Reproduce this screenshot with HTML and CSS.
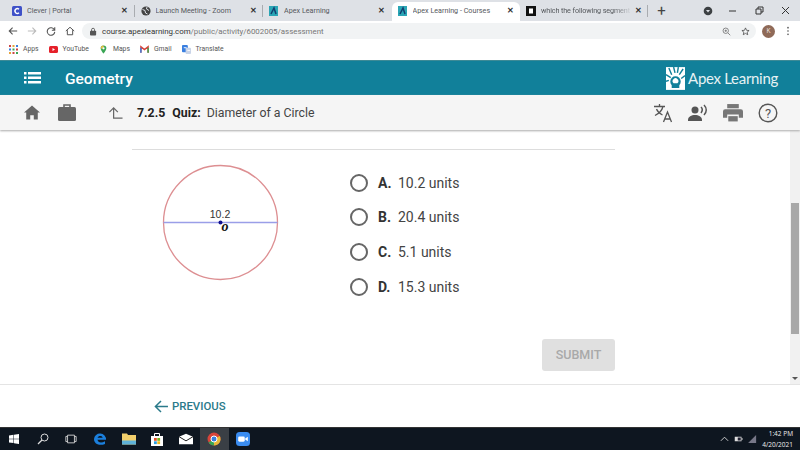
FILE: index.html
```html
<!DOCTYPE html>
<html lang="en">
<head>
<meta charset="UTF-8">
<meta name="viewport" content="width=device-width, initial-scale=1.0">
<title>Apex Learning - Courses</title>
<link rel="stylesheet" href="styles.css">
</head>
<body>

<!-- Browser tabs -->
<div class="tabstrip">
    <div class="tab">
        <svg class="favicon" viewBox="0 0 10 10"><rect width="10" height="10" rx="1.5" fill="#3f51c8"/><path d="M7 3.2A2.4 2.4 0 1 0 7 6.8" fill="none" stroke="#fff" stroke-width="1.4"/></svg>
        <span class="tab-title">Clever | Portal</span>
        <span class="tab-close">&#10005;</span>
    </div>
    <div class="tab">
        <svg class="favicon" viewBox="0 0 10 10"><circle cx="5" cy="5" r="4.6" fill="#444"/><path d="M1.5 3.5L4 4.5 4.5 7 6.5 8M6 1L5.500 3 8 4.500" fill="none" stroke="#dee1e6" stroke-width="1"/></svg>
        <span class="tab-title">Launch Meeting - Zoom</span>
        <span class="tab-close">&#10005;</span>
    </div>
    <div class="tab no-sep">
        <svg class="favicon" viewBox="0 0 10 10"><rect width="9" height="10" fill="#2aa5b5"/><path d="M2 8L5 2 7 8" fill="none" stroke="#123f70" stroke-width="1.5"/></svg>
        <span class="tab-title">Apex Learning</span>
        <span class="tab-close">&#10005;</span>
    </div>
    <div class="tab active">
        <svg class="favicon" viewBox="0 0 10 10"><rect width="9" height="10" fill="#2aa5b5"/><path d="M2 8L5 2 7 8" fill="none" stroke="#123f70" stroke-width="1.5"/></svg>
        <span class="tab-title">Apex Learning - Courses</span>
        <span class="tab-close">&#10005;</span>
    </div>
    <div class="tab last">
        <svg class="favicon" viewBox="0 0 10 10"><rect width="10" height="10" fill="#111"/><rect x="3" y="2.500" width="4" height="5" fill="#fff"/></svg>
        <span class="tab-title fade">which the following segment</span>
        <span class="tab-close">&#10005;</span>
    </div>
    <span class="new-tab">+</span>
    <div class="window-controls">
        <svg class="ctl" viewBox="0 0 10 10"><circle cx="5" cy="5" r="4.300" fill="#3c4043"/><path d="M3 4h4L5 6.500z" fill="#dee1e6"/></svg>
        <svg class="ctl" viewBox="0 0 10 10"><path d="M0 5h7" stroke="#333" fill="none"/></svg>
        <svg class="ctl" viewBox="0 0 10 10"><path d="M1 3h5v5H1zM3 3V1h5v5H6" stroke="#333" fill="none"/></svg>
        <svg class="ctl" viewBox="0 0 10 10"><path d="M1 1l7 7M8 1L1 8" stroke="#333" fill="none"/></svg>
    </div>
</div>

<!-- Address bar -->
<div class="toolbar">
    <svg class="nav-icon" viewBox="0 0 12 12"><path d="M11 6H1.500M5.500 2L1.500 6l4 4" fill="none" stroke="#555" stroke-width="1.300"/></svg>
    <svg class="nav-icon" viewBox="0 0 12 12"><path d="M1 6h9.500M6.500 2l4 4-4 4" fill="none" stroke="#bbb" stroke-width="1.300"/></svg>
    <svg class="nav-icon" viewBox="0 0 12 12"><path d="M10 4.500A4.500 4.500 0 1 0 10.500 7M10.500 1.500v3.500H7" fill="none" stroke="#555" stroke-width="1.300"/></svg>
    <svg class="nav-icon" viewBox="0 0 12 12"><path d="M1 6l5-4.500L11 6M2.800 5v5.500h6.400V5" fill="none" stroke="#555" stroke-width="1.200"/></svg>
    <div class="omnibox">
        <svg class="lock" viewBox="0 0 8 10"><rect y="4" width="7" height="5.500" rx="1" fill="#555"/><path d="M1.800 4.500V3a1.700 1.700 0 0 1 3.400 0v1.500" fill="none" stroke="#555"/></svg>
        <span class="url"><b>course.apexlearning.com</b>/public/activity/6002005/assessment</span>
        <svg class="omni-icon" viewBox="0 0 12 12"><circle cx="5" cy="5" r="3.600" fill="none" stroke="#666"/><path d="M8 8l3 3M3.500 5h3M5 3.500v3" stroke="#666" fill="none"/></svg>
        <svg class="omni-icon" viewBox="0 0 12 12"><path d="M6 1.200l1.400 3.200 3.400.3-2.600 2.200.8 3.400L6 8.500l-3 1.800.8-3.400L1.200 4.700l3.400-.3z" fill="none" stroke="#444"/></svg>
    </div>
    <span class="avatar">K</span>
    <svg class="menu-dots" viewBox="0 0 4 12"><circle cx="2" cy="2" r="1" fill="#555"/><circle cx="2" cy="6" r="1" fill="#555"/><circle cx="2" cy="10" r="1" fill="#555"/></svg>
</div>

<!-- Bookmarks -->
<div class="bookmarks">
    <span class="bookmark">
        <svg class="mark-icon" viewBox="0 0 9 9"><g fill="#c44"><rect width="2" height="2"/></g><rect x="3.500" width="2" height="2" fill="#e8a33a"/><rect x="7" width="2" height="2" fill="#3a7fe0"/><rect y="3.500" width="2" height="2" fill="#3a7fe0"/><rect x="3.500" y="3.500" width="2" height="2" fill="#3aa655"/><rect x="7" y="3.500" width="2" height="2" fill="#c44"/><rect y="7" width="2" height="2" fill="#e8a33a"/><rect x="3.500" y="7" width="2" height="2" fill="#c44"/><rect x="7" y="7" width="2" height="2" fill="#3aa655"/></svg>
        Apps
    </span>
    <span class="bookmark">
        <svg class="mark-icon wide" viewBox="0 0 9 7"><rect width="9" height="7" rx="1.500" fill="#e5202a"/><path d="M3.500 2l2.500 1.500L3.500 5z" fill="#fff"/></svg>
        YouTube
    </span>
    <span class="bookmark">
        <svg class="mark-icon" viewBox="0 0 9 11"><path d="M4.500 0.500a3.500 3.500 0 0 1 3.500 3.500c0 2.500-3.500 6.500-3.500 6.500S1 6.500 1 4A3.500 3.500 0 0 1 4.500 .5z" fill="#3aa655"/><path d="M1.200 3a3.500 3.500 0 0 1 3-2.500L5 2.500 2 5z" fill="#e8b93a"/><circle cx="4.500" cy="4" r="1.400" fill="#fff"/></svg>
        Maps
    </span>
    <span class="bookmark">
        <svg class="mark-icon" viewBox="0 0 10 8"><path d="M1 7.500V1l4 3.200L9 1v6.500" fill="none" stroke="#d8443a" stroke-width="1.600"/><path d="M1 7.500V2" stroke="#3a7fe0" stroke-width="1.600"/><path d="M9 7.500V2" stroke="#3aa655" stroke-width="1.600"/></svg>
        Gmail
    </span>
    <span class="bookmark">
        <svg class="mark-icon" viewBox="0 0 10 10"><rect width="6.500" height="8" rx="1" fill="#3a7fe0"/><rect x="4" y="3" width="6" height="7" rx="1" fill="#c9d4e8"/><path d="M2 3h3M6 6h3" stroke="#fff" fill="none"/></svg>
        Translate
    </span>
</div>

<!-- Course header -->
<header class="course-bar">
    <svg class="list-icon" viewBox="0 0 17 12"><g fill="#fff"><rect width="2.500" height="2.500"/><rect y="4.500" width="2.500" height="2.500"/><rect y="9" width="2.500" height="2.500"/><rect x="4" width="13" height="2.500"/><rect x="4" y="4.500" width="13" height="2.500"/><rect x="4" y="9" width="13" height="2.500"/></g></svg>
    <span class="course-title">Geometry</span>
    <div class="logo">
        <svg class="logo-mark" viewBox="0 0 20 24"><rect width="20" height="24" fill="#fff"/><g fill="none" stroke="#11809a" stroke-width="1.500"><path d="M3 1l3 7M8 0l1.500 6M13 0l-1 6M18 2l-4 6M0 8l5 3M20 9l-4 3M0 15l3-1"/><path d="M6 19a5.500 5.500 0 1 1 8 0v3H6z" fill="#11809a" stroke="none"/></g><path d="M8 17a3 3 0 1 1 4 0z" fill="#fff"/></svg>
        <span class="logo-text">Apex Learning</span>
    </div>
</header>

<!-- Activity bar -->
<div class="activity-bar">
    <svg class="tool home" viewBox="0 0 18 16"><path d="M9 0L0 8h2.500v8H7v-5h4v5h4.500V8H18z" fill="#666"/></svg>
    <svg class="tool case" viewBox="0 0 18 17"><path d="M6 3V1h6v2" fill="none" stroke="#666" stroke-width="1.600"/><rect y="3" width="18" height="14" rx="1.500" fill="#666"/></svg>
    <svg class="tool up" viewBox="0 0 16 14"><path d="M15.500 12.500H6V1.500M1.500 6L6 1.500 10.500 6" fill="none" stroke="#666" stroke-width="1.300"/></svg>
    <span class="crumb-num">7.2.5</span>
    <span class="crumb-kind">Quiz:</span>
    <span class="crumb-name">Diameter of a Circle</span>
    <div class="tools-right">
        <svg class="tool" viewBox="0 0 20 20"><g fill="none" stroke="#555" stroke-width="1.300"><path d="M1 3.500h11M6.500 1v2.500M10 3.500C9 7.500 6 10.500 2 12.500M3.500 6c1 2.500 3 4.500 6 6"/><path d="M10.500 19l4-10 4 10M12 16h5"/></g></svg>
        <svg class="tool" viewBox="0 0 20 18"><circle cx="7" cy="6" r="3.500" fill="#555"/><path d="M0 16c0-3.500 3.500-5 7-5s7 1.500 7 5v1H0z" fill="#555"/><path d="M13 3c1.500 1.500 1.500 4 0 6M16 1c3 3 3 7 0 10" fill="none" stroke="#555" stroke-width="1.500"/></svg>
        <svg class="tool" viewBox="0 0 19 17"><rect x="4" width="11" height="4" fill="#777"/><path d="M2 5h15a2 2 0 0 1 2 2v6h-4v-3H4v3H0V7a2 2 0 0 1 2-2z" fill="#777"/><rect x="5" y="11.500" width="9" height="5" fill="#777"/></svg>
        <svg class="tool" viewBox="0 0 20 20"><circle cx="10" cy="10" r="8.800" fill="none" stroke="#555" stroke-width="1.400"/><text x="10" y="14.500" class="help-mark">?</text></svg>
    </div>
</div>

<!-- Question area -->
<div class="page">
    <main class="content">
        <div class="question">
            <div class="rule"></div>
            <div class="question-row">
                <svg class="figure" viewBox="0 0 180 150">
                    <circle cx="88.500" cy="72.500" r="57" fill="#fff" stroke="#dd8f92" stroke-width="1.300"/>
                    <line x1="31.500" y1="72.500" x2="145.500" y2="72.500" stroke="#9a9ee8" stroke-width="1.400"/>
                    <circle cx="88.500" cy="72.500" r="2" fill="#10108f"/>
                    <text x="88" y="67.500" class="fig-label">10.2</text>
                    <text x="93" y="81" class="fig-point">o</text>
                </svg>
                <div class="options">
                    <div class="option"><span class="radio"></span><b>A.</b><span>10.2 units</span></div>
                    <div class="option"><span class="radio"></span><b>B.</b><span>20.4 units</span></div>
                    <div class="option"><span class="radio"></span><b>C.</b><span>5.1 units</span></div>
                    <div class="option"><span class="radio"></span><b>D.</b><span>15.3 units</span></div>
                </div>
            </div>
            <div class="actions"><button class="submit">SUBMIT</button></div>
        </div>
    </main>
    <div class="scrollbar">
        <div class="thumb"></div>
        <span class="scroll-arrow"></span>
    </div>
</div>

<!-- Quiz footer -->
<footer class="quiz-footer">
    <svg class="prev-arrow" viewBox="0 0 15 14"><path d="M15 7H1.500M7.500 1L1.500 7l6 6" fill="none" stroke="#2a7a8a" stroke-width="1.600"/></svg>
    <span class="prev-label">PREVIOUS</span>
</footer>

<!-- Windows taskbar -->
<div class="taskbar">
    <span class="task-slot"><svg class="task-icon small" viewBox="0 0 10 10"><path d="M0 1.500L4.500.8v3.900H0zM5 .7L10 0v4.700H5zM0 5.200h4.500v3.900L0 8.500zM5 5.200h5V10l-5-.7z" fill="#fff"/></svg></span>
    <span class="task-slot"><svg class="task-icon" viewBox="0 0 12 12"><circle cx="7.500" cy="4.500" r="3.500" fill="none" stroke="#ddd"/><path d="M5 7l-4 4" stroke="#ddd" stroke-width="1.200" fill="none"/></svg></span>
    <span class="task-slot"><svg class="task-icon" viewBox="0 0 14 12"><path d="M3 1.500h8v9H3zM3 3H1v6h2M11 3h2v6h-2" fill="none" stroke="#ddd"/></svg></span>
    <span class="task-slot"><svg class="task-icon big" viewBox="0 0 14 14"><path d="M1 7a6 6 0 0 1 12 .8H4.500c.3 2.800 4 3.400 7.500 1.400v2.800C7 14 1 12.500 1 7zM4.600 5.800h5C9.400 3.400 5.200 3.400 4.600 5.800z" fill="#1b7fdc"/></svg></span>
    <span class="task-slot"><svg class="task-icon big" viewBox="0 0 14 13"><path d="M0 1h5l1 1.500h8V12H0z" fill="#f2cf6c"/><rect y="8" width="14" height="4" fill="#5fb2d8"/></svg></span>
    <span class="task-slot"><svg class="task-icon big" viewBox="0 0 14 14"><path d="M1 4h12v10H1z" fill="#fff"/><path d="M4.500 4V1.500h5V4" fill="none" stroke="#fff"/><rect x="4" y="6" width="2.800" height="2.800" fill="#e5502a"/><rect x="7.300" y="6" width="2.800" height="2.800" fill="#7ab51d"/><rect x="4" y="9.300" width="2.800" height="2.800" fill="#2a9fe0"/><rect x="7.300" y="9.300" width="2.800" height="2.800" fill="#f2b71c"/></svg></span>
    <span class="task-slot"><svg class="task-icon big" viewBox="0 0 15 11"><path d="M0 3L7.500 0 15 3v8H0z" fill="#fff"/><path d="M0 3l7.500 4.500L15 3" fill="none" stroke="#111"/></svg></span>
    <span class="task-slot running"><svg class="task-icon big" viewBox="0 0 14 14"><circle cx="7" cy="7" r="6.500" fill="#d8443a"/><path d="M7 7L1.500 10.500A6.500 6.500 0 0 0 7 13.500z" fill="#3aa655"/><path d="M7 7l5.800-3A6.500 6.500 0 0 1 7 13.500z" fill="#e8b93a"/><circle cx="7" cy="7" r="3" fill="#3a7fe0" stroke="#fff"/></svg></span>
    <span class="task-slot"><svg class="task-icon big" viewBox="0 0 16 16"><rect width="16" height="16" rx="4" fill="#3a8cf0"/><rect x="2.500" y="5" width="7.500" height="6" rx="1.500" fill="#fff"/><path d="M10.500 7.500l3-2v5l-3-2z" fill="#fff"/></svg></span>
    <div class="tray">
        <svg class="tray-icon" viewBox="0 0 10 6"><path d="M1 5l4-4 4 4" fill="none" stroke="#ddd"/></svg>
        <svg class="tray-icon" viewBox="0 0 12 8"><rect x="1" y="1" width="9" height="6" fill="#ddd"/><rect x="10" y="3" width="1.500" height="2" fill="#ddd"/><rect x="5" y="2" width="4" height="4" fill="#223"/></svg>
        <svg class="tray-icon" viewBox="0 0 11 10"><path d="M0 10L10 0v10z" fill="#778"/></svg>
        <div class="clock"><span>1:42 PM</span><span>4/20/2021</span></div>
    </div>
</div>

</body>
</html>
```

FILE: styles.css
```css
* {
    box-sizing: border-box;
}
body {
    margin: 0;
    width: 800px;
    height: 450px;
    overflow: hidden;
    display: flex;
    flex-direction: column;
    background: #fff;
    font-family: Roboto, "Liberation Sans", sans-serif;
    color: #333;
}

/* Browser chrome */
.tabstrip {
    height: 21px;
    padding-left: 6px;
    display: flex;
    align-items: center;
    background: #dee1e6;
    font-size: 7.2px;
    color: #55585c;
}
.tab {
    width: 128.5px;
    height: 12px;
    padding: 0 3px 0 6px;
    display: flex;
    align-items: center;
    gap: 5px;
    border-right: 1px solid #a9acb0;
}
.tab.no-sep {
    border-right-color: transparent;
}
.tab.active {
    height: 19px;
    margin-top: 2px;
    padding-bottom: 2px;
    background: #fff;
    border-right-color: transparent;
    border-radius: 6px 6px 0 0;
}
.tab.last {
    width: 128px;
}
.favicon {
    width: 10px;
    height: 10px;
    flex: none;
}
.tab-title {
    flex: 1;
    white-space: nowrap;
    overflow: hidden;
}
.tab-title.fade {
    margin-right: -5px;
    letter-spacing: -0.1px;
    -webkit-mask-image: linear-gradient(to right, #000 80%, transparent);
    mask-image: linear-gradient(to right, #000 80%, transparent);
}
.tab-close {
    width: 12px;
    flex: none;
    font-size: 7.5px;
    font-weight: 700;
    color: #333;
    text-align: center;
}
.new-tab {
    width: 27px;
    text-align: center;
    font-size: 15px;
    color: #444;
}
.window-controls {
    margin-left: 28px;
    display: flex;
    gap: 16px;
}
.ctl {
    width: 10px;
    height: 10px;
}
.toolbar {
    height: 18px;
    padding: 2px 0 0 8px;
    display: flex;
    align-items: center;
    background: #fff;
}
.nav-icon {
    width: 10px;
    height: 10px;
    margin-right: 9px;
}
.omnibox {
    width: 674px;
    height: 16px;
    margin-left: -2px;
    padding: 0 6px 0 8px;
    display: flex;
    align-items: center;
    background: #f1f3f4;
    border-radius: 8px;
}
.lock {
    width: 7px;
    height: 9px;
    margin-right: 5px;
}
.url {
    flex: 1;
    font-size: 7.9px;
    color: #777;
}
.url b {
    font-weight: 400;
    color: #333;
}
.omni-icon {
    width: 9px;
    height: 9px;
    margin-left: 10px;
}
.avatar {
    width: 13px;
    height: 13px;
    margin-left: 6px;
    border-radius: 50%;
    background: #8f6a58;
    color: #e8dcd5;
    font-size: 6.500px;
    line-height: 13px;
    text-align: center;
}
.menu-dots {
    width: 4px;
    height: 10px;
    margin-left: 11px;
}
.bookmarks {
    height: 21px;
    padding: 0 0 1px 9px;
    display: flex;
    align-items: center;
    gap: 10px;
    font-size: 6.8px;
    color: #555;
}
.bookmark {
    display: flex;
    align-items: center;
    gap: 5px;
}
.mark-icon {
    width: 9px;
    height: 9px;
}
.mark-icon.wide {
    width: 9px;
    height: 7px;
}

/* Course bars */
.course-bar {
    height: 35px;
    padding: 0 22px 0 24px;
    display: flex;
    align-items: center;
    background: #11809a;
    border-top: 1px solid #3d8a96;
    color: #fff;
}
.list-icon {
    width: 17px;
    height: 12px;
}
.course-title {
    margin: 1px 0 0 24px;
    font-size: 15.5px;
    font-weight: 500;
}
.logo {
    margin-left: auto;
    display: flex;
    align-items: center;
    gap: 3px;
}
.logo-mark {
    width: 19px;
    height: 23px;
}
.logo-text {
    font-family: Lato, sans-serif;
    font-size: 15px;
    letter-spacing: -0.3px;
    color: #e6f2f4;
}
.activity-bar {
    height: 35px;
    padding: 0 22px 0 24px;
    display: flex;
    align-items: center;
    background: #f5f5f5;
    box-shadow: 0 1px 2px #aaa;
    position: relative;
    font-size: 12.3px;
}
.tool {
    width: 20px;
    height: 20px;
}
.tool.home {
    width: 16px;
    height: 15px;
}
.tool.case {
    width: 18px;
    height: 17px;
    margin-left: 18px;
}
.tool.up {
    width: 15px;
    height: 14px;
    margin-left: 32px;
}
.crumb-num {
    margin-left: 14px;
    font-weight: 700;
    color: #222;
}
.crumb-kind {
    margin-left: 7px;
    font-weight: 700;
    color: #222;
}
.crumb-name {
    margin-left: 6px;
    color: #444;
}
.tools-right {
    margin-left: auto;
    display: flex;
    align-items: center;
    gap: 15px;
}
.help-mark {
    font-size: 13px;
    fill: #555;
    text-anchor: middle;
}

/* Question */
.page {
    height: 254px;
    display: flex;
}
.content {
    flex: 1;
    padding: 19px 0 0 132px;
}
.question {
    width: 483px;
}
.rule {
    height: 1px;
    background: #ddd;
}
.question-row {
    height: 174px;
    display: flex;
}
.figure {
    width: 180px;
    height: 150px;
    flex: none;
}
.fig-label {
    font-family: "Liberation Sans", sans-serif;
    font-size: 10.5px;
    fill: #333;
    text-anchor: middle;
}
.fig-point {
    font-family: "Liberation Serif", serif;
    font-size: 14px;
    font-weight: 700;
    font-style: italic;
    fill: #111;
    text-anchor: middle;
}
.options {
    margin-left: 38px;
    padding-top: 23px;
    display: flex;
    flex-direction: column;
    gap: 15.7px;
    font-size: 14px;
    color: #444;
}
.option {
    height: 19px;
    display: flex;
    align-items: center;
}
.option b {
    width: 20px;
    margin-left: 10px;
    color: #333;
    font-weight: 700;
}
.radio {
    width: 18px;
    height: 18px;
    border: 2px solid #666;
    border-radius: 50%;
    background: #fff;
}
.actions {
    margin-top: 15px;
    display: flex;
    justify-content: flex-end;
}
.submit {
    width: 73px;
    height: 32px;
    padding: 0 0 2px;
    border: none;
    border-radius: 3px;
    background: #e0e0e0;
    color: #a9a9a9;
    font-family: Roboto, sans-serif;
    font-size: 12.5px;
    font-weight: 500;
}
.scrollbar {
    width: 10px;
    padding: 73px 1px 0;
    display: flex;
    flex-direction: column;
    align-items: center;
    background: #f1f1f1;
}
.thumb {
    width: 8px;
    height: 131px;
    background: #a8a8a8;
}
.scroll-arrow {
    margin-top: 43px;
    border: 3px solid transparent;
    border-top: 3px solid #555;
    border-bottom: none;
}

/* Footer */
.quiz-footer {
    height: 43px;
    padding-left: 154px;
    display: flex;
    align-items: center;
    gap: 4px;
    border-top: 1px solid #e4e4e4;
}
.prev-arrow {
    width: 14px;
    height: 13px;
}
.prev-label {
    font-size: 11.4px;
    font-weight: 500;
    color: #2a7a8a;
}

/* Taskbar */
.taskbar {
    height: 23px;
    flex: none;
    display: flex;
    align-items: center;
    background: #0e1620;
    border-top: 1px solid #333;
    color: #eee;
}
.task-slot {
    width: 28.6px;
    height: 22px;
    display: flex;
    align-items: center;
    justify-content: center;
}
.task-slot.running {
    background: #3a3f45;
}
.task-icon {
    width: 12px;
    height: 12px;
}
.task-icon.small {
    width: 10px;
    height: 10px;
}
.task-icon.big {
    width: 14px;
    height: 14px;
}
.tray {
    margin-left: auto;
    padding-right: 7px;
    display: flex;
    align-items: center;
    gap: 5px;
}
.tray-icon {
    width: 9px;
    height: 8px;
}
.clock {
    display: flex;
    flex-direction: column;
    align-items: flex-end;
    font-family: "Open Sans", sans-serif;
    font-size: 6.5px;
    line-height: 11px;
}
```
